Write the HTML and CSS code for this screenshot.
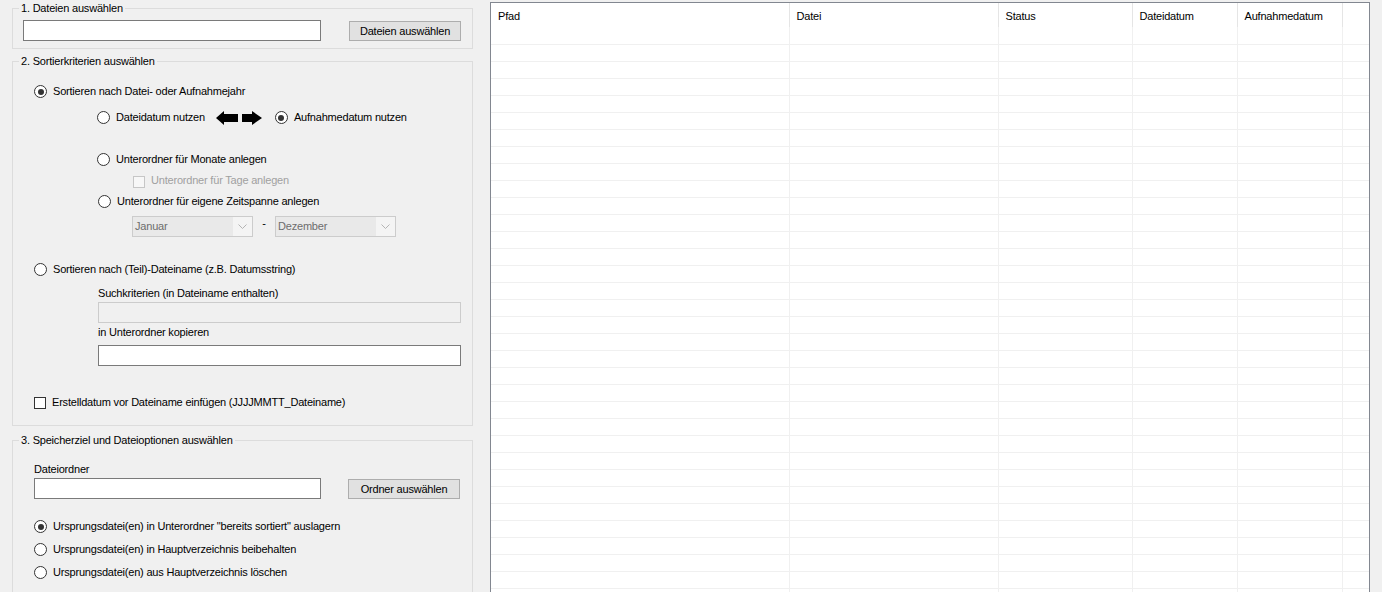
FILE: index.html
```html
<!DOCTYPE html>
<html lang="de">
<head>
    <meta charset="UTF-8">
    <title>Foto Sortierer</title>
    <link rel="stylesheet" href="styles.css">
</head>
<body>
    <div class="app">
        <div class="side">

            <!-- 1. Dateien -->
            <fieldset class="group group-files">
                <legend>1. Dateien auswählen</legend>
                <div class="row">
                    <div class="textbox tb-files"></div>
                    <div class="button btn-files">Dateien auswählen</div>
                </div>
            </fieldset>

            <!-- 2. Sortierung -->
            <fieldset class="group group-sort">
                <legend>2. Sortierkriterien auswählen</legend>

                <div class="opt lvl0 r1"><span class="radio checked"></span>Sortieren nach Datei- oder Aufnahmejahr</div>

                <div class="opt lvl1 r2">
                    <span class="radio"></span>Dateidatum nutzen
                    <svg class="arrows" width="47" height="14" viewBox="0 0 47 14">
                        <polygon points="0,7 8,0 8,3 22,3 22,11 8,11 8,14" fill="#000"/>
                        <polygon points="26,3 36,3 36,0 46,7 36,14 36,11 26,11" fill="#000"/>
                    </svg>
                    <span class="radio checked"></span>Aufnahmedatum nutzen
                </div>

                <div class="opt lvl1 r3"><span class="radio"></span>Unterordner für Monate anlegen</div>
                <div class="opt lvl2 r4 disabled"><span class="check off"></span>Unterordner für Tage anlegen</div>
                <div class="opt lvl1b r5"><span class="radio"></span>Unterordner für eigene Zeitspanne anlegen</div>

                <div class="range r6">
                    <div class="combo"><span class="combo-text">Januar</span><span class="combo-drop"><svg width="9" height="5" viewBox="0 0 9 5"><polyline points="0.5,0.5 4.5,4.5 8.5,0.5" fill="none" stroke="#b4b4b4"/></svg></span></div>
                    <span class="dash">-</span>
                    <div class="combo"><span class="combo-text">Dezember</span><span class="combo-drop"><svg width="9" height="5" viewBox="0 0 9 5"><polyline points="0.5,0.5 4.5,4.5 8.5,0.5" fill="none" stroke="#b4b4b4"/></svg></span></div>
                </div>

                <div class="opt lvl0 r7"><span class="radio"></span>Sortieren nach (Teil)-Dateiname (z.B. Datumsstring)</div>

                <div class="label lbl-search">Suchkriterien (in Dateiname enthalten)</div>
                <div class="textbox wide off"></div>
                <div class="label lbl-sub">in Unterordner kopieren</div>
                <div class="textbox wide tb-sub"></div>

                <div class="opt lvl0 r8"><span class="check"></span>Erstelldatum vor Dateiname einfügen (JJJJMMTT_Dateiname)</div>
            </fieldset>

            <!-- 3. Ziel -->
            <fieldset class="group group-target">
                <legend>3. Speicherziel und Dateioptionen auswählen</legend>
                <div class="label lbl-folder">Dateiordner</div>
                <div class="row row-folder">
                    <div class="textbox tb-folder"></div>
                    <div class="button btn-folder">Ordner auswählen</div>
                </div>
                <div class="opt lvl0 t1"><span class="radio checked"></span>Ursprungsdatei(en) in Unterordner "bereits sortiert" auslagern</div>
                <div class="opt lvl0 t2"><span class="radio"></span>Ursprungsdatei(en) in Hauptverzeichnis beibehalten</div>
                <div class="opt lvl0 t2"><span class="radio"></span>Ursprungsdatei(en) aus Hauptverzeichnis löschen</div>
            </fieldset>
        </div>

        <!-- Dateiliste -->
        <div class="listview">
            <table class="grid">
                <thead>
                    <tr>
                        <th class="c-path">Pfad</th>
                        <th class="c-file">Datei</th>
                        <th class="c-status">Status</th>
                        <th class="c-fdate">Dateidatum</th>
                        <th class="c-rdate">Aufnahmedatum</th>
                        <th class="c-fill"></th>
                    </tr>
                </thead>
                <tbody id="rows"></tbody>
            </table>
        </div>
    </div>

    <script>
        // leere Zeilen fuer das Raster
        var body = document.getElementById('rows');
        for (var i = 0; i < 34; i++) {
            var tr = document.createElement('tr');
            for (var c = 0; c < 6; c++) {
                tr.appendChild(document.createElement('td'));
            }
            body.appendChild(tr);
        }
    </script>
</body>
</html>
```

FILE: styles.css
```css
/* Reset */
html, body {
    margin: 0;
    padding: 0;
    width: 100%;
    height: 100%;
    overflow: hidden;
    background-color: #f0f0f0;
    color: #000;
    font-family: "Liberation Sans", Arial, sans-serif;
    font-size: 11px;
    letter-spacing: -0.2px;
}

.app {
    display: flex;
    align-items: flex-start;
}

/* Left Panel */
.side {
    width: 490px;
    flex: none;
    box-sizing: border-box;
    padding-left: 12px;
}

.group {
    width: 461px;
    box-sizing: border-box;
    margin: 0;
    padding: 0 0 0 21px;
    border: 1px solid #dcdcdc;
    min-width: 0;
}

.group legend {
    margin-left: -15px;
    padding: 0 2px;
    line-height: 13px;
    height: 13px;
}

.group-files {
    margin-top: 2px;
    padding: 5px 0 7px 10px;
}

.group-sort {
    margin-top: 6px;
    padding-bottom: 16px;
}

.group-target {
    margin-top: 8px;
    padding-bottom: 30px;
}

.group-files legend {
    margin-left: -4px;
}

.row {
    display: flex;
    align-items: flex-start;
}

/* Text boxes and buttons */
.textbox {
    height: 21px;
    box-sizing: border-box;
    background: #fff;
    border: 1px solid #7a7a7a;
}

.textbox.off {
    background: #f0f0f0;
    border-color: #cccccc;
}

.tb-files {
    width: 298px;
}

.button {
    height: 20px;
    box-sizing: border-box;
    margin-top: 1px;
    background: #e1e1e1;
    border: 1px solid #adadad;
    text-align: center;
    line-height: 18px;
}

.btn-files {
    width: 112px;
    margin-left: 28px;
}

/* Radio and check options */
.opt {
    display: flex;
    align-items: center;
    height: 13px;
    line-height: 13px;
    white-space: nowrap;
}

.radio {
    width: 13px;
    height: 13px;
    box-sizing: border-box;
    border: 1px solid #333;
    border-radius: 50%;
    background: #fff;
    margin-right: 6px;
    position: relative;
    flex: none;
}

.radio.checked::after {
    content: "";
    position: absolute;
    left: 2.5px;
    top: 2.5px;
    width: 6px;
    height: 6px;
    border-radius: 50%;
    background: #333;
}

.check {
    width: 12px;
    height: 12px;
    box-sizing: border-box;
    border: 1px solid #333;
    background: #fff;
    margin-right: 6px;
    flex: none;
}

.check.off {
    border-color: #c6c6c6;
    background: #f7f7f7;
}

.disabled {
    color: #a0a0a0;
}

.lvl0 {
    margin-left: 0;
}

.lvl1 {
    margin-left: 63px;
}

.lvl1b {
    margin-left: 64px;
}

.lvl2 {
    margin-left: 99px;
}

.arrows {
    margin: 0 12px 0 11px;
}

.r1 { margin-top: 17px; }
.r2 { margin-top: 13px; }
.r3 { margin-top: 29px; }
.r4 { margin-top: 8px; }
.r5 { margin-top: 8px; }
.r7 { margin-top: 26px; }
.r8 { margin-top: 30px; }

/* Month range */
.range {
    display: flex;
    align-items: flex-start;
    margin: 8px 0 0 98px;
}

.combo {
    display: flex;
    width: 121px;
    height: 21px;
    box-sizing: border-box;
    border: 1px solid #cccccc;
    background: #f0f0f0;
}

.combo-text {
    flex: 1;
    background: #e9e9e9;
    color: #6d6d6d;
    line-height: 19px;
    padding-left: 2px;
}

.combo-drop {
    width: 19px;
    display: flex;
    align-items: center;
    justify-content: center;
    background: #f4f4f4;
}

.dash {
    width: 22px;
    text-align: center;
    line-height: 15px;
}

/* Labels */
.label {
    line-height: 13px;
    height: 13px;
}

.lbl-search {
    margin: 11px 0 0 64px;
}

.wide {
    width: 363px;
    margin-left: 64px;
}

.group-sort .off {
    margin-top: 2px;
}

.lbl-sub {
    margin: 3px 0 0 64px;
}

.tb-sub {
    margin-top: 6px;
}

.lbl-folder {
    margin-top: 16px;
}

.row-folder {
    margin-top: 2px;
}

.tb-folder {
    width: 287px;
}

.btn-folder {
    width: 112px;
    margin-left: 27px;
}

.t1 { margin-top: 21px; }
.t2 { margin-top: 10px; }

/* List View */
.listview {
    margin-top: 2px;
    width: 880px;
    height: 620px;
    flex: none;
    box-sizing: border-box;
    border: 1px solid #828790;
    background: #fff;
    overflow: hidden;
}

.grid {
    border-collapse: collapse;
    table-layout: fixed;
    width: 878px;
}

.grid th {
    height: 24px;
    padding: 1px 0 0 7px;
    font-weight: normal;
    text-align: left;
    border-right: 1px solid #e5e5e5;
    box-sizing: border-box;
    overflow: hidden;
    white-space: nowrap;
}

.grid td {
    height: 17px;
    padding: 0;
    box-sizing: border-box;
    border-right: 1px solid #f0f0f0;
    border-bottom: 1px solid #f0f0f0;
}

.grid th.c-fill {
    border-right: none;
}

.grid td:last-child {
    border-right: none;
}

.c-path { width: 298px; }
.c-file { width: 209px; }
.c-status { width: 134px; }
.c-fdate { width: 105px; }
.c-rdate { width: 105px; }
.c-fill { width: 27px; }
```
